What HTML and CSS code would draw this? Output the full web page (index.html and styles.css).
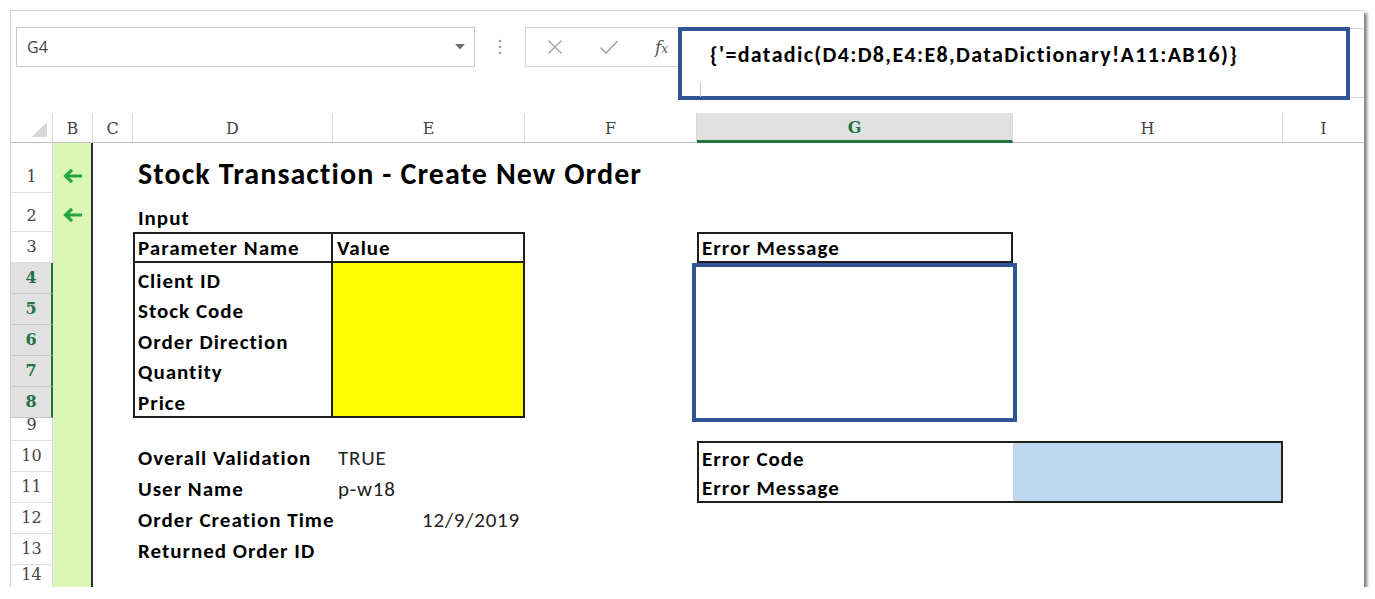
FILE: index.html
```html
<!DOCTYPE html>
<html lang="en">
<head>
<meta charset="utf-8">
<title>Stock Transaction - Create New Order</title>
<link rel="stylesheet" href="styles.css">
</head>
<body>
<div class="window">
  <div class="fbar">
    <div class="namebox">
      <span class="nb-text">G4</span>
      <svg class="nb-arrow" width="10" height="6" viewBox="0 0 10 6"><path d="M0 0H10L5 5.5Z" fill="#6f6f6f"/></svg>
    </div>
    <div class="vdots">
      <svg width="4" height="16" viewBox="0 0 4 16"><circle cx="2" cy="2" r="1.3" fill="#a0a0a0"/><circle cx="2" cy="8" r="1.3" fill="#a0a0a0"/><circle cx="2" cy="14" r="1.3" fill="#a0a0a0"/></svg>
    </div>
    <div class="btns">
      <svg width="16" height="16" viewBox="0 0 16 16"><path d="M1.5 1.5L14.5 14.5M14.5 1.5L1.5 14.5" stroke="#a4a4a4" stroke-width="1.4" fill="none"/></svg>
      <svg width="20" height="16" viewBox="0 0 20 16"><path d="M1.5 8.5L7 14L18.5 2" stroke="#a4a4a4" stroke-width="1.6" fill="none"/></svg>
      <span class="fx">f<span class="fx-x">x</span></span>
    </div>
    <div class="formula"><span class="ftext">{'=datadic(D4:D8,E4:E8,DataDictionary!A11:AB16)}</span></div>
    <div class="fhl"></div>
    <div class="fsep"></div>
  </div>

  <div class="sheet">
    <div class="colhdrs">
      <div class="ch corner"><svg width="15" height="15" viewBox="0 0 15 15"><path d="M15 0V15H0Z" fill="#d8d8d8"/></svg></div>
      <div class="ch">B</div>
      <div class="ch">C</div>
      <div class="ch">D</div>
      <div class="ch">E</div>
      <div class="ch">F</div>
      <div class="ch sel">G</div>
      <div class="ch">H</div>
      <div class="ch last">I</div>
    </div>

    <div class="body">
      <div class="rowhdrs">
        <div class="rn">1</div>
        <div class="rn">2</div>
        <div class="rn">3</div>
        <div class="rn sel">4</div>
        <div class="rn sel">5</div>
        <div class="rn sel">6</div>
        <div class="rn sel">7</div>
        <div class="rn sel">8</div>
        <div class="rn">9</div>
        <div class="rn">10</div>
        <div class="rn">11</div>
        <div class="rn">12</div>
        <div class="rn">13</div>
        <div class="rn">14</div>
      </div>

      <div class="colb">
        <div class="arr"><svg width="21" height="16" viewBox="0 0 21 16"><path d="M20 8H4M10 1.8L3.6 8L10 14.2" fill="none" stroke="#22a43e" stroke-width="3.2"/></svg></div>
        <div class="arr"><svg width="21" height="16" viewBox="0 0 21 16"><path d="M20 8H4M10 1.8L3.6 8L10 14.2" fill="none" stroke="#22a43e" stroke-width="3.2"/></svg></div>
      </div>

      <div class="cell title">Stock Transaction - Create New Order</div>
      <div class="cell input-lbl">Input</div>

      <div class="ptable">
        <div class="pt-h pt-name">Parameter Name</div>
        <div class="pt-h pt-value">Value</div>
        <div class="pt-lbl">Client ID</div>
        <div class="pt-lbl">Stock Code</div>
        <div class="pt-lbl">Order Direction</div>
        <div class="pt-lbl">Quantity</div>
        <div class="pt-lbl">Price</div>
        <div class="pt-val"></div>
      </div>

      <div class="errhead">Error Message</div>
      <div class="gsel"></div>

      <div class="cell k r10">Overall Validation</div>
      <div class="cell v r10">TRUE</div>
      <div class="cell k r11">User Name</div>
      <div class="cell v r11">p-w18</div>
      <div class="cell k r12">Order Creation Time</div>
      <div class="cell v date r12">12/9/2019</div>
      <div class="cell k r13">Returned Order ID</div>

      <div class="errbox">
        <div class="eb-lbl">Error Code</div>
        <div class="eb-lbl">Error Message</div>
        <div class="eb-val"></div>
      </div>
    </div>
  </div>
</div>
</body>
</html>
```

FILE: styles.css
```css
:root {
  --cols: 42px 40px 40px 200px 192px 172px 316px 270px 1fr;
  --rows: 50px 39px 31px 31px 31px 31px 31px 31px 23px 31px 31px 31px 31px 1fr;
  --line: #1f1f1f;
  --xlgreen: #217346;
  --hl: #2f5597;
}

* { box-sizing: border-box; }

html, body {
  margin: 0;
  padding: 0;
  background: #fff;
}

body {
  font-family: "Carlito", "Lato", "Liberation Sans", sans-serif;
  color: #000;
}

.window {
  width: 1354px;
  height: 577px;
  margin: 10px 0 0 10px;
  border-top: 1px solid #d3d3d3;
  border-left: 1px solid #d3d3d3;
  box-shadow: 3px 3px 3px rgba(0, 0, 0, 0.5);
  display: flex;
  flex-direction: column;
  background: #fff;
}

/* ---------- formula bar ---------- */
.fbar {
  position: relative;
  flex: none;
  height: 102px;
  display: flex;
  align-items: flex-start;
  padding: 16px 0 0 5px;
}

.namebox {
  flex: none;
  width: 459px;
  height: 40px;
  border: 1px solid #c8c8c8;
  display: flex;
  align-items: center;
  justify-content: space-between;
  padding: 0 9px 0 10px;
}

.nb-text {
  font-family: "Open Sans", sans-serif;
  font-size: 16px;
  color: #444;
}

.vdots {
  flex: none;
  width: 50px;
  height: 40px;
  display: flex;
  align-items: center;
  justify-content: center;
}

.btns {
  flex: none;
  width: 170px;
  height: 40px;
  border: 1px solid #d4d4d4;
  display: flex;
  align-items: center;
  padding-left: 21px;
  gap: 36px;
}

.fx {
  font-family: "DejaVu Serif", serif;
  font-style: italic;
  font-size: 17px;
  color: #555;
}

.fx-x { font-size: 12px; }

.formula {
  flex: 1;
  height: 70px;
  margin-top: 1px;
  border-top: 1px solid #d4d4d4;
  border-bottom: 1px solid #d4d4d4;
  padding: 15px 0 0 15px;
}

.ftext {
  position: relative;
  z-index: 2;
  font-size: 22px;
  font-weight: 700;
  line-height: 22px;
  letter-spacing: 1.35px;
  white-space: nowrap;
}

.fhl {
  position: absolute;
  z-index: 1;
  left: 667px;
  top: 16px;
  width: 672px;
  height: 73px;
  border: 4px solid var(--hl);
  background: #fff;
}

.fsep {
  position: absolute;
  z-index: 2;
  left: 689px;
  top: 71px;
  width: 1px;
  height: 15px;
  background: #c8c8c8;
}

/* ---------- sheet ---------- */
.sheet {
  flex: 1;
  display: flex;
  flex-direction: column;
}

.colhdrs {
  flex: none;
  height: 30px;
  display: grid;
  grid-template-columns: var(--cols);
}

.ch {
  display: flex;
  align-items: center;
  justify-content: center;
  padding-top: 2px;
  border-right: 1px solid #dadada;
  border-bottom: 1px solid #bfbfbf;
  font-family: "DejaVu Serif", serif;
  font-size: 16px;
  color: #444;
}

.ch.sel {
  background: #e1e1e1;
  color: var(--xlgreen);
  font-weight: 700;
  border-bottom: 3px solid var(--xlgreen);
}

.ch.corner {
  justify-content: flex-end;
  align-items: flex-end;
  padding: 0 5px 5px 0;
}

.ch.last { border-right: none; }

.body {
  flex: 1;
  display: grid;
  grid-template-columns: var(--cols);
  grid-template-rows: var(--rows);
}

.rowhdrs {
  grid-column: 1;
  grid-row: 1 / -1;
  display: grid;
  grid-template-rows: var(--rows);
}

.rn {
  display: flex;
  align-items: flex-end;
  justify-content: center;
  padding-bottom: 5px;
  border-bottom: 1px solid #dedede;
  border-right: 1px solid #dcdcdc;
  font-family: "DejaVu Serif", serif;
  font-size: 16px;
  line-height: 20px;
  color: #444;
}

.rn.sel {
  background: #e1e1e1;
  color: var(--xlgreen);
  font-weight: 700;
  border-bottom-color: #c9c9c9;
  border-right: 2px solid var(--xlgreen);
}

.colb {
  grid-column: 2;
  grid-row: 1 / -1;
  display: grid;
  grid-template-rows: var(--rows);
  background: #dbf7b6;
  border-right: 2px solid #2e2e2e;
}

.arr {
  display: flex;
  align-items: flex-end;
  justify-content: center;
  padding-bottom: 9px;
}

/* ---------- cells ---------- */
.cell {
  align-self: end;
  padding: 0 5px 3px;
  font-size: 21px;
  line-height: 22px;
  font-weight: 700;
  letter-spacing: 1px;
  white-space: nowrap;
}

.title {
  grid-column: 4 / 8;
  grid-row: 1;
  font-size: 30px;
  line-height: 32px;
  letter-spacing: 1.1px;
}

.input-lbl {
  grid-column: 4;
  grid-row: 2;
}

.ptable {
  grid-column: 4 / 6;
  grid-row: 3 / 9;
  display: grid;
  grid-template-columns: 198px 1fr;
  grid-template-rows: 29px repeat(5, 1fr);
  border: 2px solid var(--line);
}

.pt-h,
.pt-lbl,
.eb-lbl,
.errhead {
  display: flex;
  align-items: flex-end;
  padding: 0 3px 2px;
  font-size: 21px;
  line-height: 22px;
  font-weight: 700;
  letter-spacing: 1px;
  white-space: nowrap;
}

.pt-h { border-bottom: 2px solid var(--line); }

.pt-name,
.pt-lbl {
  grid-column: 1;
  border-right: 2px solid var(--line);
}

.pt-value { padding-left: 4px; }

.pt-val {
  grid-column: 2;
  grid-row: 2 / 7;
  background: #ffff00;
}

.errhead {
  grid-column: 7;
  grid-row: 3;
  border: 2px solid var(--line);
}

.gsel {
  grid-column: 7;
  grid-row: 4 / 9;
  margin: 0 -4px -4px -5px;
  border: 4px solid var(--hl);
}

.k { grid-column: 4; }

.v {
  grid-column: 5;
  font-weight: 400;
  letter-spacing: 0.8px;
  color: #222;
}

.v.date { text-align: right; }

.r10 { grid-row: 10; }
.r11 { grid-row: 11; }
.r12 { grid-row: 12; }
.r13 { grid-row: 13; }

.errbox {
  grid-column: 7 / 9;
  grid-row: 10 / 12;
  display: grid;
  grid-template-columns: 314px 1fr;
  grid-template-rows: 1fr 1fr;
  border: 2px solid var(--line);
}

.eb-lbl { grid-column: 1; }

.eb-val {
  grid-column: 2;
  grid-row: 1 / 3;
  background: #bdd7ee;
}
```
